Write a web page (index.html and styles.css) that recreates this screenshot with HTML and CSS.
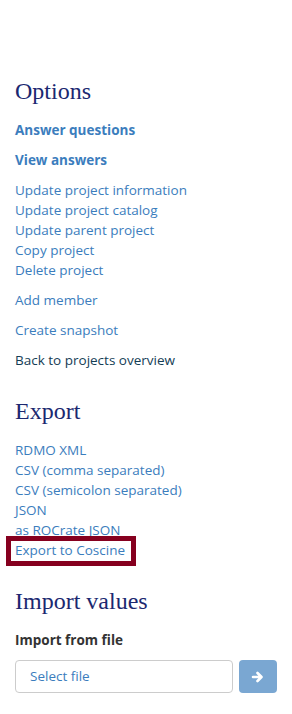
FILE: index.html
```html
<!DOCTYPE html>
<html lang="en">
<head>
    <meta charset="UTF-8">
    <meta name="viewport" content="width=device-width, initial-scale=1.0">
    <title>Project</title>
    <link rel="stylesheet" href="styles.css">
</head>
<body>
    <div class="sidebar">
        <h2 class="side-heading">Options</h2>
        <ul class="side-list">
            <li><a href="#" class="strong">Answer questions</a></li>
        </ul>
        <ul class="side-list">
            <li><a href="#" class="strong">View answers</a></li>
        </ul>
        <ul class="side-list">
            <li><a href="#">Update project information</a></li>
            <li><a href="#">Update project catalog</a></li>
            <li><a href="#">Update parent project</a></li>
            <li><a href="#">Copy project</a></li>
            <li><a href="#">Delete project</a></li>
        </ul>
        <ul class="side-list">
            <li><a href="#">Add member</a></li>
        </ul>
        <ul class="side-list">
            <li><a href="#">Create snapshot</a></li>
        </ul>
        <ul class="side-list">
            <li><a href="#" class="back">Back to projects overview</a></li>
        </ul>

        <h2 class="side-heading">Export</h2>
        <ul class="side-list">
            <li><a href="#">RDMO XML</a></li>
            <li><a href="#">CSV (comma separated)</a></li>
            <li><a href="#">CSV (semicolon separated)</a></li>
            <li><a href="#">JSON</a></li>
            <li><a href="#">as ROCrate JSON</a></li>
            <li><a href="#" class="highlight">Export to Coscine</a></li>
        </ul>

        <h2 class="side-heading">Import values</h2>
        <form class="import-form">
            <label class="import-label">Import from file</label>
            <div class="import-row">
                <div class="file-field">Select file</div>
                <button type="submit" class="file-submit">
                    <svg width="14" height="14" viewBox="0 0 14 14">
                        <path d="M2 7h8M6.5 3l4 4-4 4" fill="none" stroke="#fff" stroke-width="2.6" stroke-linecap="round" stroke-linejoin="round"/>
                    </svg>
                </button>
            </div>
        </form>
    </div>
</body>
</html>
```

FILE: styles.css
```css
body{
    margin:0px;
    padding:0px;
    font-family:"Open Sans", sans-serif;
    font-size:13.5px;
    background-color:#ffffff;
}

.sidebar{
    padding:78px 15px 0px 15px;
}

.side-heading{
    font-family:"Liberation Serif", serif;
    font-weight:normal;
    font-size:24px;
    line-height:26px;
    color:#1b2870;
    margin:0px 0px 16px 0px;
}

.side-list + .side-heading{
    margin-top:28px;
}

.side-list{
    list-style:none;
    margin:0px 0px 10px 0px;
    padding:0px;
}

.side-list li{
    line-height:20px;
}

.side-list a{
    color:#3b7dbd;
    text-decoration:none;
}

.side-list a.strong{
    font-weight:bold;
}

.side-list a.back{
    color:#143d55;
}

.side-list a.highlight{
    position:relative;
}

.side-list a.highlight::after{
    content:"";
    position:absolute;
    left:-9px;
    right:-11px;
    top:-5px;
    bottom:-7px;
    border:5px solid #86001f;
}

.import-label{
    display:block;
    font-weight:bold;
    color:#333333;
    line-height:20px;
    margin-bottom:10px;
}

.import-row{
    display:flex;
    gap:6px;
}

.file-field{
    flex:1;
    height:31px;
    line-height:31px;
    border:1px solid #cccccc;
    border-radius:4px;
    padding:0px 14px;
    color:#3b7dbd;
}

.file-submit{
    width:38px;
    height:33px;
    border:none;
    border-radius:4px;
    background-color:#7aa7d2;
    display:flex;
    align-items:center;
    justify-content:center;
    padding:0px;
}
```
